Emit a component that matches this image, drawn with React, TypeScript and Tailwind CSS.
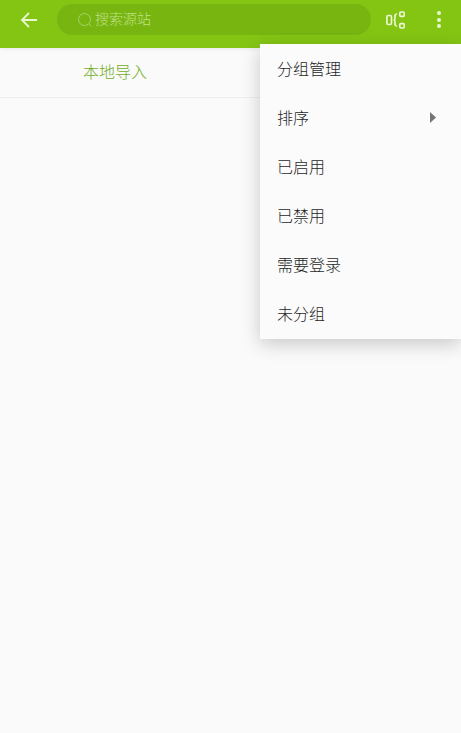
import React from "react";

const font = { fontFamily: '"Noto Sans CJK SC", "Noto Sans", sans-serif' };

function MenuItem({ label, arrow }: { label: string; arrow?: boolean }) {
  return (
    <div className="flex h-[49px] items-center justify-between pl-[17px] pr-[25px]">
      <span className="mb-[3px] text-[16px] font-light leading-none text-[#1f1f1f]">{label}</span>
      {arrow && (
        <svg width="6" height="11" viewBox="0 0 6 11" className="mb-[1px]">
          <path d="M0 0 L6 5.5 L0 11 Z" fill="#757575" />
        </svg>
      )}
    </div>
  );
}

export default function App() {
  return (
    <div className="relative h-[733px] w-[461px] overflow-hidden bg-[#fafafa]" style={font}>
      <header className="flex h-[48px] items-center bg-[#84c514] pb-[9px] shadow-[0_1px_4px_rgba(0,0,0,0.08)]">
        <div className="flex w-[57px] justify-center">
          <svg width="18" height="16" viewBox="0 0 18 16" fill="none" stroke="#eaf6d2" strokeWidth="1.8">
            <path d="M17 8 H2 M9 1 L2 8 L9 15" />
          </svg>
        </div>
        <div className="flex h-[31px] w-[314px] items-center rounded-full bg-[#78b511] pl-[20px] text-[#c0e286]">
          <svg width="16" height="16" viewBox="0 0 16 16" fill="none" stroke="#a9d463" strokeWidth="1">
            <circle cx="7.5" cy="7.5" r="6" />
            <path d="M12 12 L14.5 14.5" />
          </svg>
          <span className="mb-[3px] ml-[2px] text-[14px] font-light leading-none">搜索源站</span>
        </div>
        <div className="ml-[15px] flex w-[20px] justify-center">
          <svg width="20" height="18" viewBox="0 0 20 18" fill="none" stroke="#eef8d8" strokeWidth="1.6">
            <rect x="0.9" y="4.5" width="4.6" height="9" rx="1.5" />
            <path d="M11 3 Q9 3 9 5 V7.5 Q9 9 7.5 9 Q9 9 9 10.5 V13 Q9 15 11 15" />
            <rect x="13.8" y="1" width="4.4" height="4.4" rx="1" />
            <rect x="13.8" y="12.6" width="4.4" height="4.4" rx="1" />
          </svg>
        </div>
        <div className="ml-[31px] flex flex-col gap-[2.5px]">
          <span className="h-[4px] w-[4px] rounded-full bg-[#eaf6d2]" />
          <span className="h-[4px] w-[4px] rounded-full bg-[#eaf6d2]" />
          <span className="h-[4px] w-[4px] rounded-full bg-[#eaf6d2]" />
        </div>
      </header>
      <div className="h-[50px] w-full border-b border-[#eeeeee]">
        <div className="flex h-[49px] w-[230px] items-center justify-center">
          <span className="mb-[4px] text-[16px] font-light leading-none text-[#72ad1e]">本地导入</span>
        </div>
      </div>
      <div className="absolute left-[260px] top-[44px] w-[201px] bg-[#fbfbfb] py-[0.5px] shadow-[0_5px_18px_rgba(0,0,0,0.2)]">
        <MenuItem label="分组管理" />
        <MenuItem label="排序" arrow />
        <MenuItem label="已启用" />
        <MenuItem label="已禁用" />
        <MenuItem label="需要登录" />
        <MenuItem label="未分组" />
      </div>
    </div>
  );
}
